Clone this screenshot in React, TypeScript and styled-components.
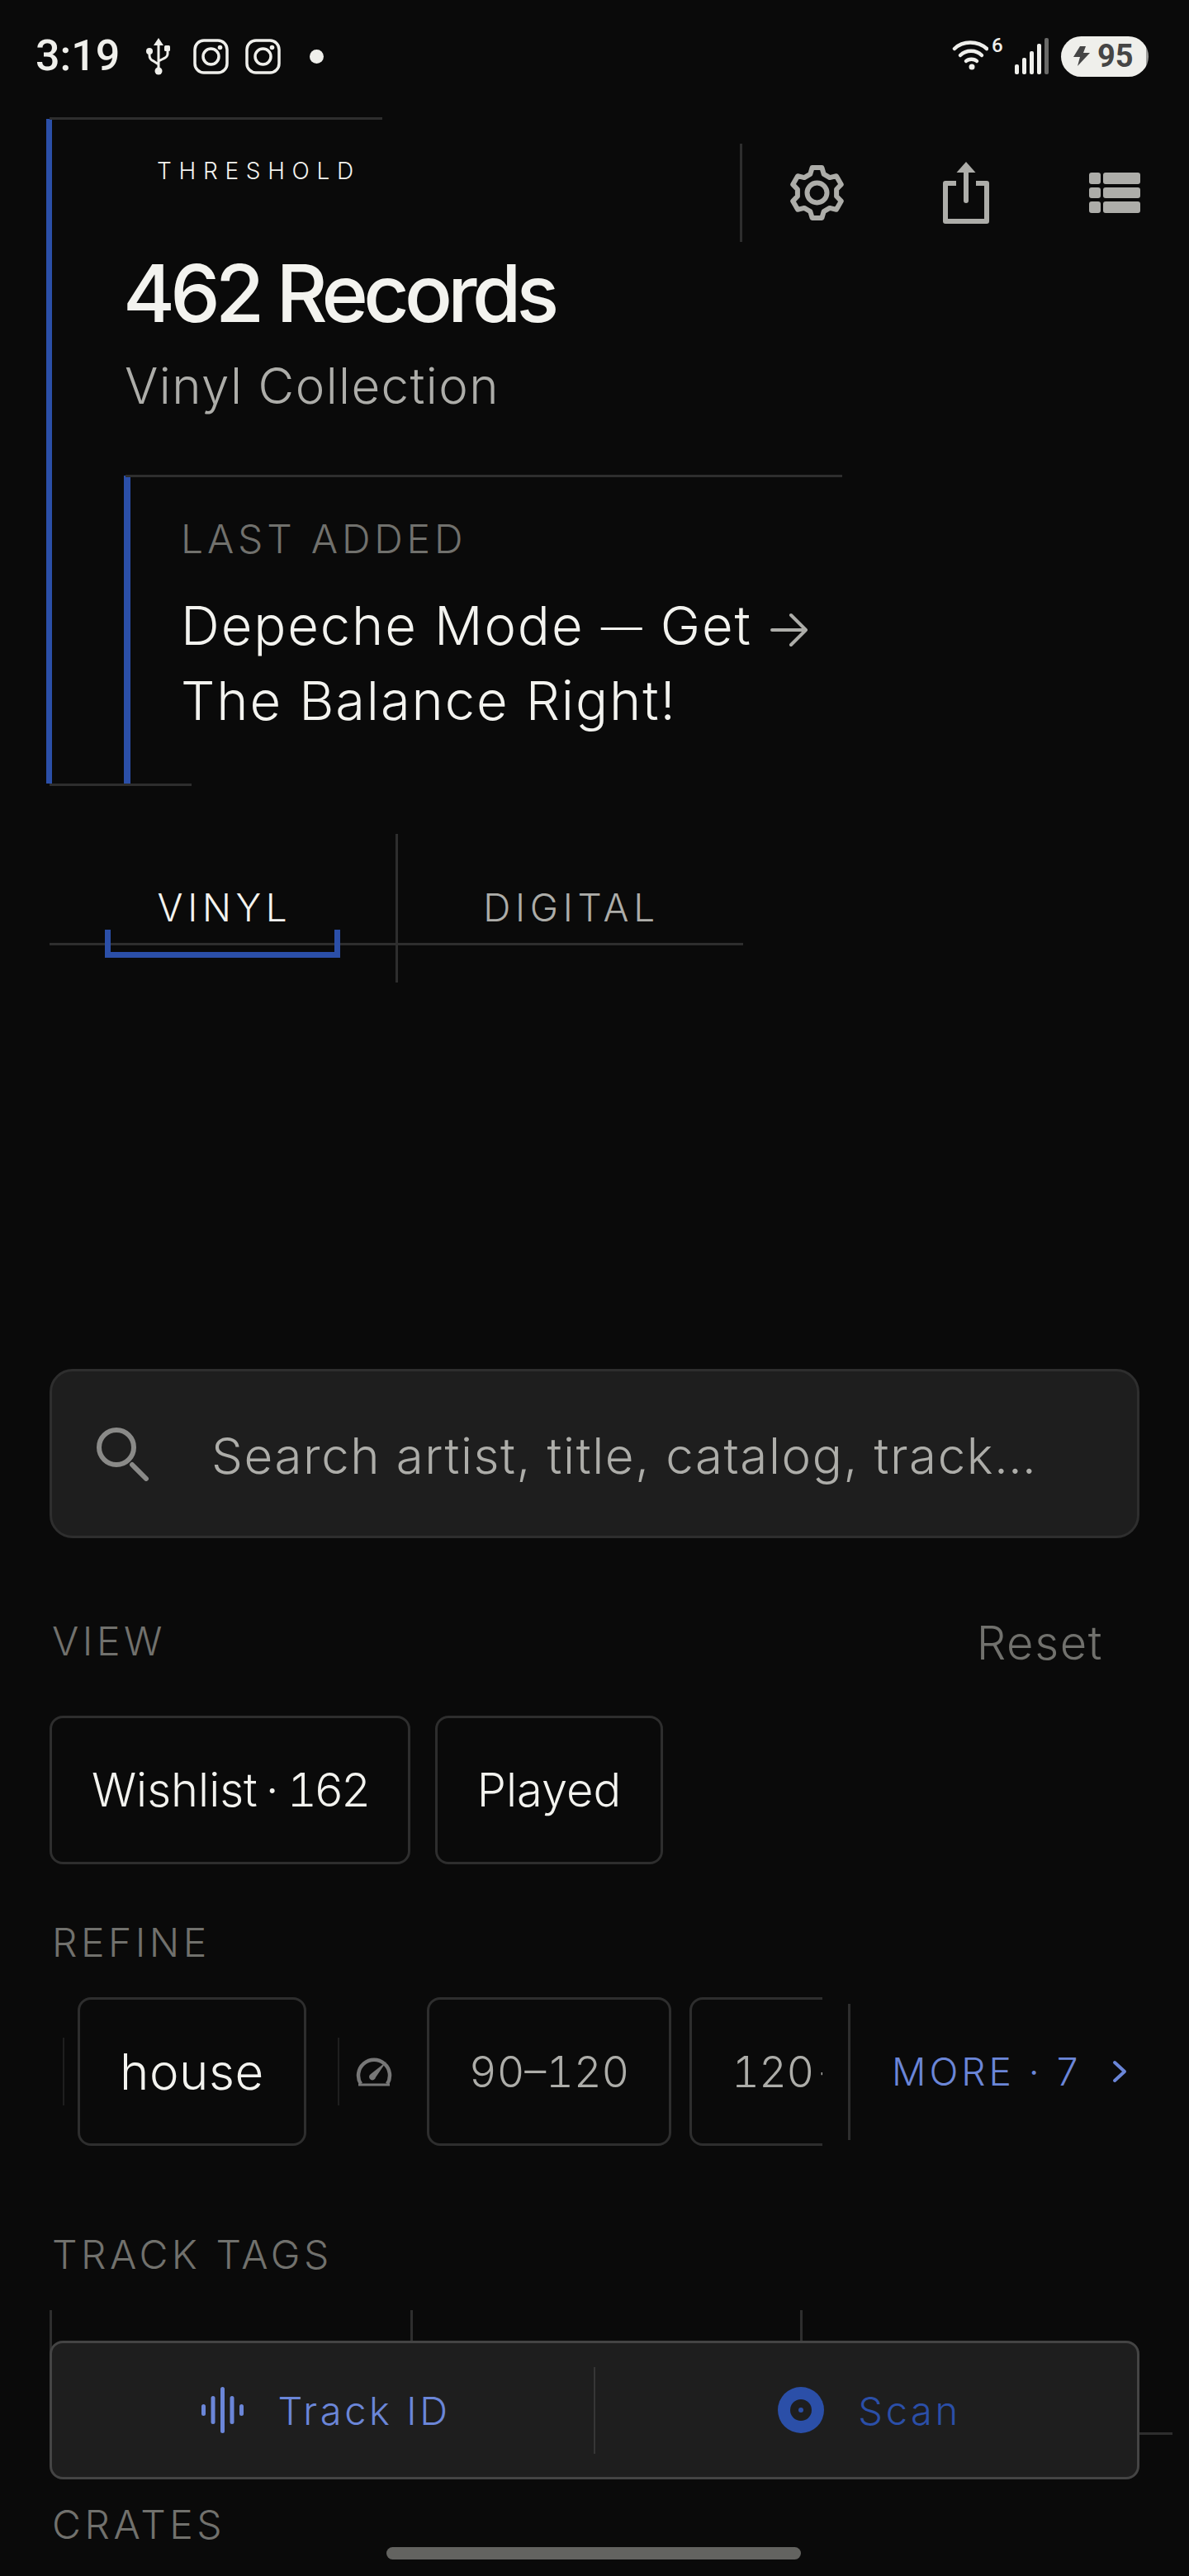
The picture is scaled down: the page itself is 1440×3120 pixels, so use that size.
import React from 'react';
import styled, { createGlobalStyle } from 'styled-components';

const colors = {
  bg: '#0a0a0a',
  panel: '#1e1e1e',
  rule: '#2e2e2e',
  text: '#f3f3ef',
  soft: '#adada9',
  muted: '#71716d',
  blue: '#2b4fa8',
  lightBlue: '#6b86d8',
};

const GlobalStyle = createGlobalStyle`
  html, body {
    margin: 0;
    padding: 0;
    background: ${colors.bg};
  }
  body {
    font-family: Inter, "Liberation Sans", sans-serif;
    font-weight: 300;
    color: ${colors.text};
  }
  * {
    box-sizing: border-box;
  }
`;

const Page = styled.div`
  position: relative;
  width: 1440px;
  height: 3120px;
  overflow: hidden;
  background: ${colors.bg};
`;

/* status bar */

const StatusBar = styled.div`
  height: 136px;
  padding: 0 49px 0 43px;
  display: flex;
  align-items: center;
  justify-content: space-between;
  font-family: Roboto, Inter, sans-serif;
  color: #efefeb;
`;

const StatusLeft = styled.div`
  display: flex;
  align-items: center;
`;

const Clock = styled.span`
  font-size: 52px;
  font-weight: 500;
  line-height: 52px;
  width: 133px;
`;

const StatusGlyph = styled.svg<{ $gap: number }>`
  display: block;
  flex: none;
  margin-right: ${(p) => p.$gap}px;
`;

const StatusDot = styled.span`
  width: 17px;
  height: 17px;
  margin-left: 15px;
  border-radius: 50%;
  background: #efefeb;
`;

const StatusRight = styled.div`
  display: flex;
  align-items: center;
`;

const WifiWrap = styled.div`
  display: flex;
  align-items: flex-start;
  width: 76px;
  height: 44px;
`;

const WifiBadge = styled.span`
  font-size: 24px;
  font-weight: 500;
  line-height: 18px;
  margin-left: 4px;
`;

const Battery = styled.div`
  width: 106px;
  height: 49px;
  margin-left: 14px;
  padding-left: 14px;
  display: flex;
  align-items: center;
  gap: 9px;
  border-radius: 25px;
  background: linear-gradient(to right, #efefeb 97%, #9b9b99 97%);
  color: #454545;
  font-size: 38px;
  font-weight: 700;
`;

/* hero */

const Hero = styled.section`
  position: relative;
  width: 1325px;
  margin: 8px 0 0 56px;
  padding-top: 49px;
  border-left: 7px solid ${colors.blue};

  &::before {
    content: '';
    position: absolute;
    top: -2px;
    left: -3px;
    width: 403px;
    height: 3px;
    background: ${colors.rule};
  }

  &::after {
    content: '';
    position: absolute;
    bottom: -3px;
    left: -3px;
    width: 172px;
    height: 3px;
    background: ${colors.rule};
  }
`;

const HeroTop = styled.div`
  display: flex;
  justify-content: space-between;
  align-items: flex-start;
`;

const TitleBlock = styled.div`
  padding-left: 88px;
`;

const Brand = styled.div`
  margin-left: 39px;
  font-size: 28px;
  line-height: 28px;
  letter-spacing: 8.7px;
`;

const Title = styled.h1`
  margin: 84px 0 0 -2px;
  font-size: 96px;
  font-weight: 500;
  line-height: 100px;
  letter-spacing: -5.7px;
`;

const Subtitle = styled.div`
  margin-top: 27px;
  font-size: 60px;
  line-height: 70px;
  letter-spacing: 1.4px;
  color: ${colors.soft};
`;

const Toolbar = styled.div`
  display: flex;
  align-items: center;
  height: 119px;
  margin-top: -19px;
  padding-left: 57px;
  border-left: 3px solid ${colors.rule};
`;

const ToolIcon = styled.svg<{ $gap?: number }>`
  display: block;
  flex: none;
  margin-left: ${(p) => p.$gap ?? 0}px;
`;

const LastAdded = styled.div`
  position: relative;
  min-height: 373px;
  margin: 74px 0 0 87px;
  padding: 52px 0 0 61px;
  border-left: 8px solid ${colors.blue};

  &::before {
    content: '';
    position: absolute;
    top: -1px;
    left: -6px;
    width: 868px;
    height: 3px;
    background: ${colors.rule};
  }
`;

const LastLabel = styled.div`
  font-size: 48px;
  line-height: 50px;
  letter-spacing: 4.8px;
  color: ${colors.muted};
`;

const LastTitle = styled.div`
  margin-top: 35px;
  font-size: 65px;
  line-height: 90px;
  letter-spacing: 1.9px;
  white-space: nowrap;
`;

const LastDash = styled.span`
  font-size: 50px;
  vertical-align: 4px;
`;

const LastArrow = styled.svg`
  display: inline-block;
  margin-left: 2px;
  vertical-align: -3px;
`;

/* tabs */

const TabBar = styled.nav`
  position: relative;
  display: flex;
  align-items: flex-start;
  width: 840px;
  height: 180px;
  margin: 61px 0 0 60px;

  &::after {
    content: '';
    position: absolute;
    top: 132px;
    left: 0;
    right: 0;
    height: 3px;
    background: ${colors.rule};
  }
`;

const Tab = styled.div<{ $active?: boolean }>`
  position: relative;
  flex: 1;
  padding: 66px 0 0 4px;
  text-align: center;
  font-size: 46px;
  line-height: 46px;
  letter-spacing: 5.7px;
  color: ${(p) => (p.$active ? colors.text : colors.soft)};
`;

const TabBracket = styled.span`
  position: absolute;
  z-index: 1;
  top: 116px;
  left: 67px;
  width: 285px;
  height: 34px;
  border: 7px solid ${colors.blue};
  border-top: 0;
`;

const TabDivider = styled.span`
  flex: none;
  width: 3px;
  height: 180px;
  margin: 0 -1.5px;
  background: ${colors.rule};
`;

/* filters */

const Filters = styled.main`
  margin-top: 468px;
  padding: 0 60px;
`;

const Search = styled.div`
  height: 205px;
  padding-left: 54px;
  display: flex;
  align-items: center;
  gap: 75px;
  background: ${colors.panel};
  border: 3px solid ${colors.rule};
  border-radius: 28px;
`;

const SearchText = styled.span`
  margin-top: 5px;
  font-size: 60px;
  line-height: 70px;
  letter-spacing: 1.6px;
  color: ${colors.soft};
`;

const SectionLabel = styled.div`
  padding-left: 3px;
  font-size: 48px;
  line-height: 48px;
  letter-spacing: 4.5px;
  color: ${colors.muted};
`;

const ViewHead = styled.div`
  display: flex;
  justify-content: space-between;
  align-items: flex-start;
  height: 60px;
  margin-top: 101px;
  padding-right: 44px;
`;

const Reset = styled.span`
  margin-top: -2px;
  font-size: 56px;
  line-height: 56px;
  letter-spacing: 1.6px;
  color: ${colors.muted};
`;

const ChipRow = styled.div`
  display: flex;
  gap: 30px;
  margin-top: 54px;
`;

const Chip = styled.div<{ $dim?: boolean; $size?: number; $pad?: number; $track?: number }>`
  flex: none;
  display: flex;
  align-items: center;
  height: 180px;
  padding: 0 ${(p) => p.$pad ?? 48}px;
  border: 3px solid ${colors.rule};
  border-radius: 16px;
  font-size: ${(p) => p.$size ?? 56}px;
  font-weight: ${(p) => (p.$dim ? 300 : 350)};
  font-feature-settings: 'tnum';
  letter-spacing: ${(p) => p.$track ?? 0}px;
  white-space: nowrap;
  color: ${(p) => (p.$dim ? colors.soft : colors.text)};
`;

const ChipDot = styled.span`
  margin: 0 10px;
`;

const ChipCount = styled.span`
  letter-spacing: -3.5px;
`;

const Refine = styled(SectionLabel)`
  margin-top: 71px;
`;

const FilterRow = styled.div`
  display: flex;
  align-items: center;
  margin-top: 42px;
  height: 180px;
`;

const FilterScroll = styled.div`
  flex: none;
  display: flex;
  align-items: center;
  width: 936px;
  height: 180px;
  overflow: hidden;
`;

const FilterSep = styled.span<{ $left: number }>`
  flex: none;
  width: 2px;
  height: 82px;
  margin-left: ${(p) => p.$left}px;
  background: #1f1f1f;
`;

const GaugeIcon = styled.svg`
  flex: none;
  margin: 0 42px 0 20px;
`;

const ChipGap = styled.span<{ $width: number }>`
  flex: none;
  width: ${(p) => p.$width}px;
`;

const MoreRule = styled.span`
  flex: none;
  width: 3px;
  height: 165px;
  margin-left: 31px;
  background: ${colors.rule};
`;

const More = styled.div`
  flex: none;
  display: flex;
  align-items: center;
  margin-left: 50px;
  font-size: 46px;
  letter-spacing: 4px;
  color: ${colors.lightBlue};
  white-space: nowrap;
`;

const Chevron = styled.svg`
  flex: none;
  margin-left: 37px;
`;

const TrackTags = styled(SectionLabel)`
  margin-top: 108px;
`;

const TagGrid = styled.div`
  display: flex;
  width: 1360px;
  height: 151px;
  margin-top: 43px;
  border-bottom: 3px solid ${colors.rule};
`;

const TagCell = styled.div<{ $width: number }>`
  flex: ${(p) => `0 0 ${p.$width}px`};
  border-left: 3px solid ${colors.rule};
`;

const Crates = styled(SectionLabel)`
  margin-top: 85px;
`;

/* floating action bar */

const ActionBar = styled.div`
  position: absolute;
  left: 60px;
  bottom: 117px;
  display: flex;
  align-items: center;
  width: 1320px;
  height: 168px;
  background: ${colors.panel};
  border: 3px solid #444;
  border-radius: 16px;
`;

const Action = styled.div<{ $dark?: boolean }>`
  flex: 1;
  display: flex;
  align-items: center;
  justify-content: center;
  gap: 41px;
  padding-left: 8px;
  font-size: 47px;
  letter-spacing: 3.6px;
  color: ${(p) => (p.$dark ? colors.blue : colors.lightBlue)};
`;

const ActionRule = styled.span`
  flex: none;
  width: 2px;
  height: 105px;
  background: #363636;
`;

const HomeBar = styled.div`
  position: absolute;
  left: 468px;
  bottom: 20px;
  width: 502px;
  height: 15px;
  border-radius: 8px;
  background: #636360;
`;

/* drawings */

const UsbIcon = () => (
  <StatusGlyph $gap={28} width="30" height="46" viewBox="0 0 30 46" fill="none">
    <path d="M16 1l6 9H10z" fill="#efefeb" />
    <path d="M16 8v33M5 17v5q0 5 5 7l6 4M27 16v4q0 4-5 6l-6 3" stroke="#efefeb" strokeWidth="3" />
    <circle cx="16" cy="41" r="4.5" fill="#efefeb" />
    <circle cx="5" cy="17" r="4" fill="#efefeb" />
    <rect x="23" y="10" width="7" height="7" rx="1.5" fill="#efefeb" />
  </StatusGlyph>
);

const InstagramIcon = () => (
  <StatusGlyph $gap={20} width="43" height="43" viewBox="0 0 43 43" fill="none">
    <rect x="2" y="2" width="39" height="39" rx="11" stroke="#efefeb" strokeWidth="3.5" />
    <circle cx="21.5" cy="21.5" r="9.5" stroke="#efefeb" strokeWidth="3.5" />
    <circle cx="32.5" cy="10.5" r="2.8" fill="#efefeb" />
  </StatusGlyph>
);

const WifiIcon = () => (
  <svg width="44" height="40" viewBox="0 0 44 40" fill="none" stroke="#efefeb" strokeWidth="4.5" strokeLinecap="round">
    <path d="M3 13C13 3 31 3 42 13" />
    <path d="M10 21C17 14 29 14 36 21" />
    <path d="M17 28C20 25 27 25 30 28" />
    <circle cx="24" cy="35" r="3.5" fill="#efefeb" stroke="none" />
  </svg>
);

const SignalIcon = () => (
  <svg width="42" height="44" viewBox="0 0 42 44" fill="#efefeb">
    <rect x="0" y="32" width="5" height="12" rx="2" />
    <rect x="9" y="24" width="5" height="20" rx="2" />
    <rect x="18" y="16" width="5" height="28" rx="2" />
    <rect x="27" y="7" width="5" height="37" rx="2" />
    <rect x="36" y="0" width="5" height="44" rx="2" fill="#6a6a68" />
  </svg>
);

const BoltIcon = () => (
  <svg width="21" height="24" viewBox="0 0 21 24" fill="#454545">
    <path d="M9 0h7l-3 8h8L6 24l3-11H1z" />
  </svg>
);

// six tooth gear outline, worked out from the angles
const gearPath = (() => {
  const c = 33.5;
  const points: string[] = [];
  for (let i = 0; i < 6; i += 1) {
    const a = -90 + i * 60;
    [
      [a - 20, 24],
      [a - 11, 31],
      [a + 11, 31],
      [a + 20, 24],
    ].forEach(([deg, r]) => {
      const rad = (deg * Math.PI) / 180;
      points.push(`${(c + r * Math.cos(rad)).toFixed(1)} ${(c + r * Math.sin(rad)).toFixed(1)}`);
    });
  }
  return `M${points.join('L')}Z`;
})();

const GearIcon = () => (
  <ToolIcon width="67" height="67" viewBox="0 0 67 67" fill="none" stroke={colors.soft} strokeWidth="6" strokeLinejoin="round">
    <path d={gearPath} />
    <circle cx="33.5" cy="33.5" r="12" />
  </ToolIcon>
);

const ShareIcon = () => (
  <ToolIcon $gap={119} width="56" height="75" viewBox="0 0 56 75" fill="none" stroke={colors.soft}>
    <path d="M28 0L39.5 13H16.5z" fill={colors.soft} stroke="none" />
    <path d="M28 10V47" strokeWidth="6" strokeLinecap="round" />
    <path d="M16 26H3V72H53V26H40" strokeWidth="6" strokeLinejoin="round" />
  </ToolIcon>
);

const ListIcon = () => (
  <ToolIcon $gap={121} width="62" height="49" viewBox="0 0 62 49" fill={colors.soft}>
    <rect x="0" y="0" width="14" height="14" rx="3" />
    <rect x="17" y="0" width="45" height="14" rx="3" />
    <rect x="0" y="18" width="14" height="13" rx="3" />
    <rect x="17" y="18" width="45" height="13" rx="3" />
    <rect x="0" y="35" width="14" height="14" rx="3" />
    <rect x="17" y="35" width="45" height="14" rx="3" />
  </ToolIcon>
);

const ArrowIcon = () => (
  <LastArrow width="46" height="42" viewBox="0 0 46 42" fill="none" stroke={colors.soft} strokeWidth="4" strokeLinecap="round" strokeLinejoin="round">
    <path d="M2 21H43M25 3L43 21L25 39" />
  </LastArrow>
);

const SearchIcon = () => (
  <svg width="64" height="66" viewBox="0 0 64 66" fill="none" stroke="#8a8a88" strokeWidth="6" strokeLinecap="round">
    <circle cx="24" cy="25" r="21" />
    <path d="M43 46L60 63" />
  </svg>
);

const Gauge = () => (
  <GaugeIcon width="44" height="36" viewBox="0 0 44 36" fill="none">
    <path d="M6 33A19 19 0 1 1 38 33" stroke="#777" strokeWidth="4.5" />
    <path d="M3 34H41" stroke="#777" strokeWidth="3" />
    <path d="M37 6L24 25a4 4 0 1 1-6-4z" fill="#777" />
  </GaugeIcon>
);

const ChevronIcon = () => (
  <Chevron width="20" height="28" viewBox="0 0 20 28" fill="none" stroke={colors.lightBlue} strokeWidth="4" strokeLinecap="round" strokeLinejoin="round">
    <path d="M4 3L16 14L4 25" />
  </Chevron>
);

const WaveIcon = () => (
  <svg width="51" height="56" viewBox="0 0 51 56" fill={colors.lightBlue}>
    <rect x="0" y="21" width="5" height="14" rx="2.5" />
    <rect x="11.5" y="11" width="5" height="34" rx="2.5" />
    <rect x="23" y="0" width="5" height="56" rx="2.5" />
    <rect x="34.5" y="11" width="5" height="34" rx="2.5" />
    <rect x="46" y="21" width="5" height="14" rx="2.5" />
  </svg>
);

const DiscIcon = () => (
  <svg width="56" height="56" viewBox="0 0 56 56">
    <circle cx="28" cy="28" r="28" fill={colors.blue} />
    <circle cx="28" cy="28" r="13" fill={colors.panel} />
    <circle cx="28" cy="28" r="3" fill={colors.blue} />
  </svg>
);

const App = () => {
  return (
    <Page>
      <GlobalStyle />

      <StatusBar>
        <StatusLeft>
          <Clock>3:19</Clock>
          <UsbIcon />
          <InstagramIcon />
          <InstagramIcon />
          <StatusDot />
        </StatusLeft>
        <StatusRight>
          <WifiWrap>
            <WifiIcon />
            <WifiBadge>6</WifiBadge>
          </WifiWrap>
          <SignalIcon />
          <Battery>
            <BoltIcon />
            <span>95</span>
          </Battery>
        </StatusRight>
      </StatusBar>

      <Hero>
        <HeroTop>
          <TitleBlock>
            <Brand>THRESHOLD</Brand>
            <Title>462 Records</Title>
            <Subtitle>Vinyl Collection</Subtitle>
          </TitleBlock>
          <Toolbar>
            <GearIcon />
            <ShareIcon />
            <ListIcon />
          </Toolbar>
        </HeroTop>
        <LastAdded>
          <LastLabel>LAST ADDED</LastLabel>
          <LastTitle>
            Depeche Mode <LastDash>—</LastDash> Get <ArrowIcon />
            <br />
            The Balance Right!
          </LastTitle>
        </LastAdded>
      </Hero>

      <TabBar>
        <Tab $active>
          VINYL
          <TabBracket />
        </Tab>
        <TabDivider />
        <Tab>DIGITAL</Tab>
      </TabBar>

      <Filters>
        <Search>
          <SearchIcon />
          <SearchText>Search artist, title, catalog, track…</SearchText>
        </Search>

        <ViewHead>
          <SectionLabel>VIEW</SectionLabel>
          <Reset>Reset</Reset>
        </ViewHead>
        <ChipRow>
          <Chip>
            Wishlist
            <ChipDot>·</ChipDot>
            <ChipCount>162</ChipCount>
          </Chip>
          <Chip>Played</Chip>
        </ChipRow>

        <Refine>REFINE</Refine>
        <FilterRow>
          <FilterScroll>
            <FilterSep $left={16} />
            <ChipGap $width={16} />
            <Chip $size={60} $pad={48} $track={0.6}>house</Chip>
            <FilterSep $left={38} />
            <Gauge />
            <Chip $dim $size={52} $pad={48}>90–120</Chip>
            <ChipGap $width={22} />
            <Chip $dim $size={52} $pad={48} $track={-0.5}>120-</Chip>
          </FilterScroll>
          <MoreRule />
          <More>
            MORE · 7
            <ChevronIcon />
          </More>
        </FilterRow>

        <TrackTags>TRACK TAGS</TrackTags>
        <TagGrid>
          <TagCell $width={437} />
          <TagCell $width={472} />
          <TagCell $width={451} />
        </TagGrid>
        <Crates>CRATES</Crates>
      </Filters>

      <ActionBar>
        <Action>
          <WaveIcon />
          Track ID
        </Action>
        <ActionRule />
        <Action $dark>
          <DiscIcon />
          Scan
        </Action>
      </ActionBar>
      <HomeBar />
    </Page>
  );
};

export default App;
